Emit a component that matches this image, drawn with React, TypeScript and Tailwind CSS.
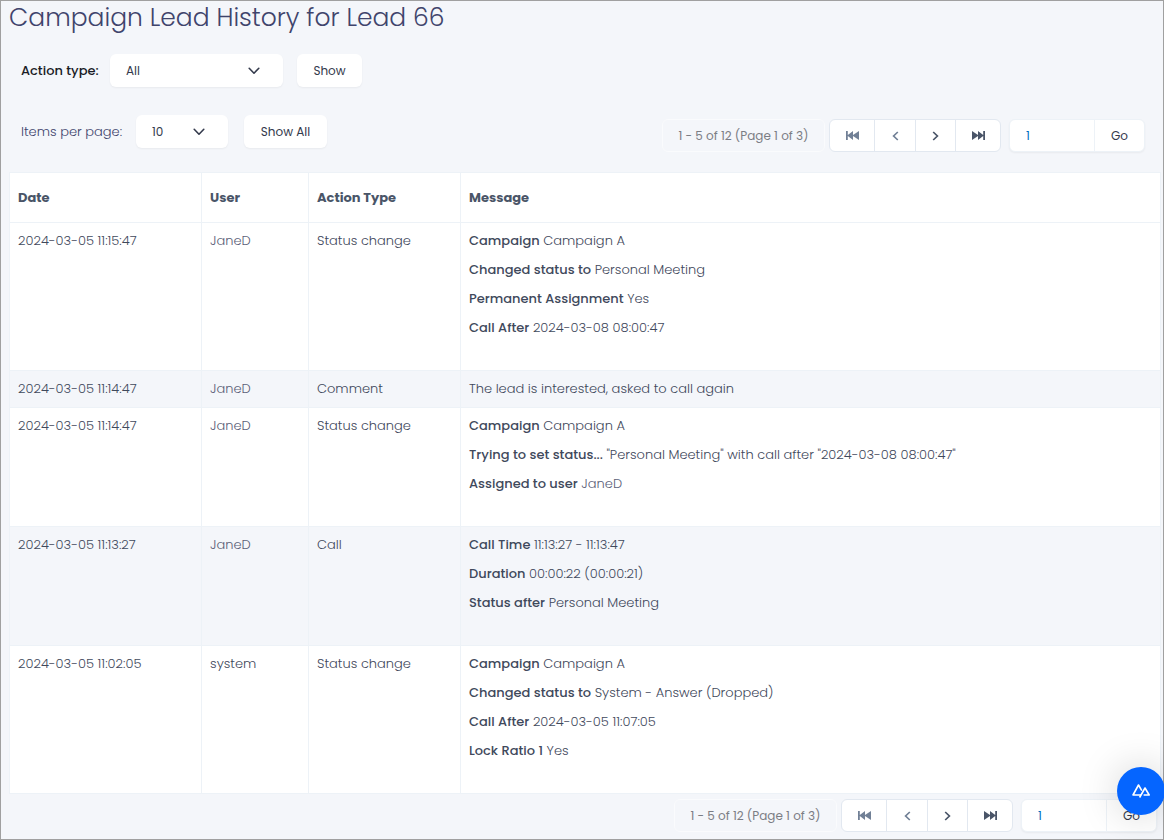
import { useState } from "react"

type Entry = {
  date: string
  user: string
  action: string
  details?: [string, string][]
  text?: string
}

const entries: Entry[] = [
  {
    date: "2024-03-05 11:15:47",
    user: "JaneD",
    action: "Status change",
    details: [
      ["Campaign", "Campaign A"],
      ["Changed status to", "Personal Meeting"],
      ["Permanent Assignment", "Yes"],
      ["Call After", "2024-03-08 08:00:47"],
    ],
  },
  {
    date: "2024-03-05 11:14:47",
    user: "JaneD",
    action: "Comment",
    text: "The lead is interested, asked to call again",
  },
  {
    date: "2024-03-05 11:14:47",
    user: "JaneD",
    action: "Status change",
    details: [
      ["Campaign", "Campaign A"],
      ["Trying to set status...", '"Personal Meeting" with call after "2024-03-08 08:00:47"'],
      ["Assigned to user", "JaneD"],
    ],
  },
  {
    date: "2024-03-05 11:13:27",
    user: "JaneD",
    action: "Call",
    details: [
      ["Call Time", "11:13:27 - 11:13:47"],
      ["Duration", "00:00:22 (00:00:21)"],
      ["Status after", "Personal Meeting"],
    ],
  },
  {
    date: "2024-03-05 11:02:05",
    user: "system",
    action: "Status change",
    details: [
      ["Campaign", "Campaign A"],
      ["Changed status to", "System - Answer (Dropped)"],
      ["Call After", "2024-03-05 11:07:05"],
      ["Lock Ratio 1", "Yes"],
    ],
  },
]

function Chevron() {
  return (
    <svg viewBox="0 0 12 8" className="pointer-events-none absolute top-[13px] right-[23px] h-2 w-3" fill="none">
      <path d="M1.2 1.3 6 6.2l4.8-4.9" stroke="#343a4c" strokeWidth="1.6" strokeLinecap="round" strokeLinejoin="round" />
    </svg>
  )
}

function SkipIcon({ flip = false }: { flip?: boolean }) {
  return (
    <svg viewBox="0 0 13 9" className={flip ? "h-[9px] w-[13px] -scale-x-100" : "h-[9px] w-[13px]"} fill="currentColor">
      <path d="M0 0h1.8v4L7 0v4l6-4v9L7 5v4L1.8 5v4H0z" />
    </svg>
  )
}

function ArrowIcon({ flip = false }: { flip?: boolean }) {
  return (
    <svg viewBox="0 0 7 10" className={flip ? "h-[10px] w-[7px] -scale-x-100" : "h-[10px] w-[7px]"} fill="none">
      <path d="M5.8 1 1.6 5l4.2 4" stroke="currentColor" strokeWidth="1.7" />
    </svg>
  )
}

function Pager({ id }: { id: string }) {
  const [page, setPage] = useState("1")

  return (
    <div className="flex items-start">
      <span className="mr-1 flex h-[33px] w-[163px] items-center justify-center rounded-md border border-[#fafbfd] text-xs whitespace-nowrap text-[#7b7d84]">
        1 - 5 of 12 (Page 1 of 3)
      </span>
      <div className="mr-2 flex h-[33px] divide-x divide-[#e2e8f0] overflow-hidden rounded-md border border-[#e2e8f0] bg-white">
        <button aria-label="First page" className="flex w-[45px] items-center justify-center text-[#718096]">
          <SkipIcon />
        </button>
        <button aria-label="Previous page" className="flex w-[41px] items-center justify-center text-[#718096]">
          <ArrowIcon />
        </button>
        <button aria-label="Next page" className="flex w-10 items-center justify-center text-[#4a5568]">
          <ArrowIcon flip />
        </button>
        <button aria-label="Last page" className="flex w-11 items-center justify-center text-[#4a5568]">
          <SkipIcon flip />
        </button>
      </div>
      <div className="flex h-[33px] overflow-hidden rounded-md border border-[#edf2f7] bg-white shadow-xs">
        <input
          id={id}
          aria-label="Page number"
          value={page}
          onChange={(e) => setPage(e.target.value)}
          className="w-[84px] px-4 text-xs text-[#0070c0] outline-none"
        />
        <button className="w-[50px] border-l border-[#edf2f7] text-xs text-[#343a4c]">Go</button>
      </div>
    </div>
  )
}

export default function App() {
  return (
    <div className="min-h-screen border border-[#a0a0a0] bg-[#f4f6fa] font-['Poppins','Inter',sans-serif] text-[13px] leading-5 font-light text-[#3f495c]">
      <h1 className="pl-2 text-[25px] leading-[34px] font-light text-[#40446c]">Campaign Lead History for Lead 66</h1>

      <div className="mt-[19px] flex items-center pl-5">
        <label htmlFor="action" className="w-[89px] font-medium text-[#1a1c26]">
          Action type:
        </label>
        <div className="relative mr-[14px]">
          <select id="action" className="block h-[33px] w-[173px] appearance-none rounded-md bg-white px-4 text-xs font-normal text-[#343a4c] shadow-xs outline-none">
            <option>All</option>
            <option>Call</option>
            <option>Comment</option>
            <option>Status change</option>
          </select>
          <Chevron />
        </div>
        <button className="h-[33px] w-[65px] rounded-md bg-white text-xs font-normal text-[#343a4c] shadow-xs">Show</button>
      </div>

      <div className="mt-7 flex justify-between pr-[18px] pl-5">
        <div className="flex h-[33px] items-center">
          <label htmlFor="perPage" className="w-[115px] text-[#40446c]">
            Items per page:
          </label>
          <div className="relative mr-4">
            <select id="perPage" className="block h-[33px] w-[92px] appearance-none rounded-md bg-white px-4 text-xs font-normal text-[#343a4c] shadow-xs outline-none">
              <option>10</option>
              <option>25</option>
              <option>50</option>
            </select>
            <Chevron />
          </div>
          <button className="h-[33px] w-[83px] rounded-md bg-white text-xs font-normal text-[#343a4c] shadow-xs">Show All</button>
        </div>
        <div className="pt-1 font-normal">
          <Pager id="topPage" />
        </div>
      </div>

      <div className="mt-5 pr-[2px] pl-2">
        <table className="w-full table-fixed border-collapse border border-[#edf2f7] bg-white text-left">
          <colgroup>
            <col className="w-[192px]" />
            <col className="w-[107px]" />
            <col className="w-[152px]" />
            <col />
          </colgroup>
          <thead>
            <tr className="h-[50px]">
              {["Date", "User", "Action Type", "Message"].map((h) => (
                <th key={h} className="border border-[#edf2f7] px-2 font-bold text-[#4a5568]">
                  {h}
                </th>
              ))}
            </tr>
          </thead>
          <tbody>
            {entries.map((entry, i) => (
              <tr key={i} className="align-top even:bg-[#f4f6fa]">
                <td className="border border-[#edf2f7] p-2">{entry.date}</td>
                <td className={entry.user === "system" ? "border border-[#edf2f7] p-2" : "border border-[#edf2f7] p-2 text-[#5b6078]"}>
                  {entry.user}
                </td>
                <td className="border border-[#edf2f7] p-2">{entry.action}</td>
                <td className="border border-[#edf2f7] p-2">
                  {entry.text}
                  {entry.details && (
                    <div className="pb-[15px]">
                      {entry.details.map(([label, value]) => (
                        <p key={label} className="mb-[9px]">
                          <b className="font-medium">{label}</b>{" "}
                          <span className={value === "JaneD" ? "text-[#5b6078]" : ""}>{value}</span>
                        </p>
                      ))}
                    </div>
                  )}
                </td>
              </tr>
            ))}
          </tbody>
        </table>
      </div>

      <div className="mt-[5px] flex justify-end pr-[6px] pb-[6px] font-normal">
        <Pager id="bottomPage" />
      </div>

      <button
        aria-label="Help"
        className="fixed -right-px bottom-[25px] flex h-12 w-12 items-center justify-center rounded-full bg-[#0565ff] shadow-[0_0_40px_rgba(0,0,0,0.18)]"
      >
        <svg viewBox="0 0 20 16" className="h-4 w-5" fill="none" stroke="#fff" strokeWidth="1.6" strokeLinejoin="round">
          <path d="M10 12H2L7.5 2l3.3 5.6" />
          <path d="M8.6 14.5 14 5l4.2 7h-5.6" />
        </svg>
      </button>
    </div>
  )
}
